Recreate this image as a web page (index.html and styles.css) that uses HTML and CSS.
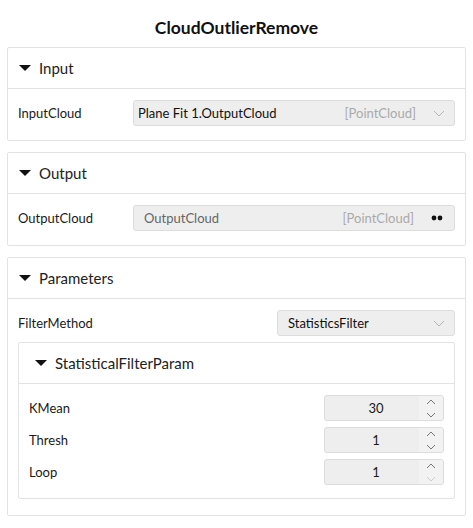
FILE: index.html
```html
<!DOCTYPE html>
<html lang="en">
<head>
    <meta charset="UTF-8">
    <title>CloudOutlierRemove</title>
    <link rel="stylesheet" href="styles.css">
</head>
<body>
    <h1 class="title">CloudOutlierRemove</h1>

    <div class="panel">
        <div class="panel-header"><span class="caret"></span>Input</div>
        <div class="panel-body">
            <div class="row">
                <span class="label">InputCloud</span>
                <div class="select wide">
                    <span class="value">Plane Fit 1.OutputCloud</span>
                    <span class="type">[PointCloud]</span>
                    <svg class="chev" width="12" height="7" viewBox="0 0 12 7"><path d="M1 1l5 5 5-5" fill="none" stroke="#b5b5b5" stroke-width="1"/></svg>
                </div>
            </div>
        </div>
    </div>

    <div class="panel">
        <div class="panel-header"><span class="caret"></span>Output</div>
        <div class="panel-body">
            <div class="row">
                <span class="label">OutputCloud</span>
                <div class="select wide">
                    <span class="value muted">OutputCloud</span>
                    <span class="type">[PointCloud]</span>
                    <svg class="dots" width="12" height="6" viewBox="0 0 12 6"><circle cx="3" cy="3" r="2.4" fill="#111"/><circle cx="9" cy="3" r="2.4" fill="#111"/></svg>
                </div>
            </div>
        </div>
    </div>

    <div class="panel">
        <div class="panel-header"><span class="caret"></span>Parameters</div>
        <div class="panel-body last">
            <div class="row">
                <span class="label">FilterMethod</span>
                <div class="select narrow">
                    <span class="value">StatisticsFilter</span>
                    <svg class="chev" width="12" height="7" viewBox="0 0 12 7"><path d="M1 1l5 5 5-5" fill="none" stroke="#b5b5b5" stroke-width="1"/></svg>
                </div>
            </div>

            <div class="panel inner">
                <div class="panel-header"><span class="caret"></span>StatisticalFilterParam</div>
                <div class="panel-body">
                    <div class="row">
                        <span class="label">KMean</span>
                        <div class="spin">
                            <span class="num">30</span>
                            <span class="arrows">
                                <svg width="10" height="6" viewBox="0 0 10 6"><path d="M1 5l4-4 4 4" fill="none" stroke="#777" stroke-width="1"/></svg>
                                <svg width="10" height="6" viewBox="0 0 10 6"><path d="M1 1l4 4 4-4" fill="none" stroke="#777" stroke-width="1"/></svg>
                            </span>
                        </div>
                    </div>
                    <div class="row">
                        <span class="label">Thresh</span>
                        <div class="spin">
                            <span class="num">1</span>
                            <span class="arrows">
                                <svg width="10" height="6" viewBox="0 0 10 6"><path d="M1 5l4-4 4 4" fill="none" stroke="#777" stroke-width="1"/></svg>
                                <svg width="10" height="6" viewBox="0 0 10 6"><path d="M1 1l4 4 4-4" fill="none" stroke="#777" stroke-width="1"/></svg>
                            </span>
                        </div>
                    </div>
                    <div class="row">
                        <span class="label">Loop</span>
                        <div class="spin">
                            <span class="num">1</span>
                            <span class="arrows">
                                <svg width="10" height="6" viewBox="0 0 10 6"><path d="M1 5l4-4 4 4" fill="none" stroke="#777" stroke-width="1"/></svg>
                                <svg width="10" height="6" viewBox="0 0 10 6"><path d="M1 1l4 4 4-4" fill="none" stroke="#ccc" stroke-width="1"/></svg>
                            </span>
                        </div>
                    </div>
                </div>
            </div>
        </div>
    </div>
</body>
</html>
```

FILE: styles.css
```css
* {
    margin: 0;
    padding: 0;
    box-sizing: border-box;
}

body {
    font-family: Lato, "Noto Sans", sans-serif;
    font-size: 13px;
    color: #1a1a1a;
    background: #fff;
    padding: 0 7px;
}

.title {
    font-size: 17.5px;
    font-weight: bold;
    text-align: center;
    color: #111;
    height: 47px;
    line-height: 56px;
}

.panel {
    border: 1px solid #e3e3e3;
    border-radius: 2px;
    margin-bottom: 11px;
}

.panel-header {
    height: 41px;
    display: flex;
    align-items: center;
    padding-left: 11px;
    font-size: 15px;
    color: #222;
    border-bottom: 1px solid #e3e3e3;
}

.caret {
    width: 0;
    height: 0;
    border-left: 6px solid transparent;
    border-right: 6px solid transparent;
    border-top: 6px solid #111;
    margin-right: 8px;
}

.panel-body {
    padding: 11px 10px 14px;
    display: flex;
    flex-direction: column;
    gap: 6px;
}

.panel-body.last {
    padding-bottom: 16px;
}

.row {
    display: flex;
    align-items: center;
    justify-content: space-between;
    height: 26px;
}

.label {
    color: #1a1a1a;
}

.select {
    height: 26px;
    background: #eeeeee;
    border: 1px solid #dcdcdc;
    border-radius: 3px;
    display: flex;
    align-items: center;
    padding: 0 8px 0 4px;
}

.select.wide {
    width: 322px;
}

.select.narrow {
    width: 178px;
    padding-left: 10px;
}

.value {
    flex: 1;
    color: #111;
}

.value.muted {
    color: #666;
    padding-left: 6px;
}

.type {
    color: #aaa;
    margin-right: 17px;
}

.chev {
    margin-right: 1px;
}

.dots {
    margin-right: 3px;
}

.inner {
    margin-bottom: 0;
}

.inner .panel-header {
    padding-left: 16px;
}

.inner .panel-body {
    padding-bottom: 13px;
}

.spin {
    width: 120px;
    height: 26px;
    background: #eeeeee;
    border: 1px solid #dcdcdc;
    border-radius: 3px;
    display: flex;
    align-items: center;
}

.num {
    flex: 1;
    text-align: center;
    padding-left: 8px;
}

.arrows {
    width: 24px;
    height: 100%;
    display: flex;
    flex-direction: column;
    align-items: center;
    justify-content: center;
    gap: 7px;
    background: #f2f2f2;
    border-radius: 0 3px 3px 0;
}

.arrows svg {
    display: block;
}
```
